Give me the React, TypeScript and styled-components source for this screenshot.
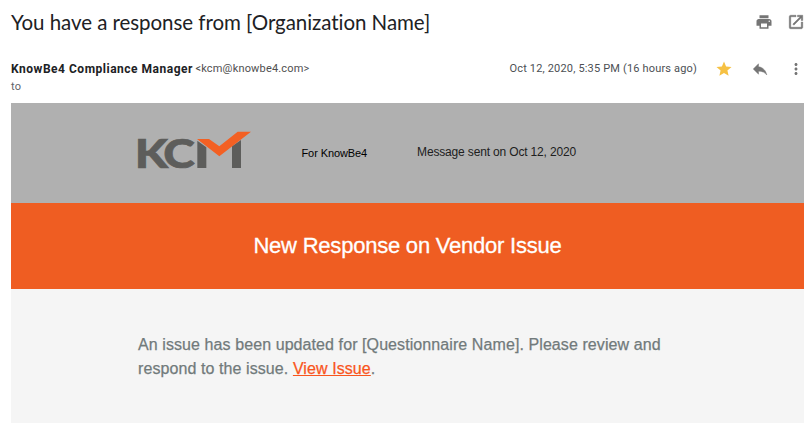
import React from "react";
import styled, { createGlobalStyle } from "styled-components";
import { MdPrint, MdOpenInNew, MdStar, MdReply, MdMoreVert } from "react-icons/md";

const GlobalStyle = createGlobalStyle`
  body { margin: 0; background: #fff; }
  * { box-sizing: border-box; }
`;

const Page = styled.main`
  width: 810px;
  height: 441px;
  padding: 0 6px 0 11px;
  overflow: hidden;
  font-family: Roboto, sans-serif;
  color: #202124;
`;

const SubjectBar = styled.header`
  display: flex;
  align-items: center;
  justify-content: space-between;
  height: 44px;
  margin-right: -1px;
`;

const Subject = styled.h1`
  margin: 0;
  font: 400 20.5px/28px Lato, sans-serif;
  letter-spacing: -0.05px;
  white-space: nowrap;
`;

const Actions = styled.div<{ $gap: number }>`
  display: flex;
  align-items: center;
  gap: ${(p) => p.$gap}px;
`;

const IconButton = styled.button<{ $color?: string; $bold?: boolean }>`
  display: grid;
  place-items: center;
  width: 18px;
  height: 18px;
  padding: 0;
  border: 0;
  background: none;
  color: ${(p) => p.$color ?? "#757575"};

  path:not([fill="none"]) {
    stroke-width: ${(p) => (p.$bold ? 0.6 : 0)};
  }
  path[fill="none"] {
    stroke: none;
  }
`;

const SenderBar = styled.div`
  display: flex;
  align-items: center;
  height: 18px;
  margin: 16px -1px 0 0;
  white-space: nowrap;
`;

const Sender = styled.span`
  font-size: 12px;
  font-weight: 700;
  letter-spacing: 0.51px;
`;

const Address = styled.span`
  margin: -1px 0 0 2.5px;
  font-size: 11px;
  letter-spacing: 0.17px;
  color: #505050;
`;

const SentAt = styled.span`
  margin: -1px 18px 0 auto;
  font-size: 11px;
  letter-spacing: 0.17px;
  color: #4c4f54;
`;

const Recipient = styled.div`
  height: 25px;
  font-size: 11px;
  line-height: 17px;
  letter-spacing: 0.2px;
  color: #5f6368;
`;

const Message = styled.article`
  width: 793px;
  font-family: "Liberation Sans", Arial, sans-serif;
`;

const Brand = styled.section`
  display: flex;
  align-items: flex-start;
  height: 100px;
  padding: 28px 0 0 127px;
  background: #b0b0b0;
`;

const Logo = styled.svg`
  display: block;
  width: 114px;
  height: 38px;
  overflow: visible;
`;

const LogoLetter = styled.text`
  font: 900 122px Lato, sans-serif;
  fill: #5d5d5b;
  stroke: #5d5d5b;
  stroke-width: 2px;
`;

const Company = styled.span`
  margin: 15px 0 0 49.5px;
  font-size: 11px;
  line-height: 14px;
  letter-spacing: -0.1px;
  color: #000;
`;

const SentNote = styled.span`
  margin: 14px 0 0 50px;
  font-size: 12px;
  line-height: 14px;
  letter-spacing: -0.16px;
  color: #202020;
`;

const Banner = styled.h2`
  display: flex;
  align-items: center;
  justify-content: center;
  height: 86px;
  margin: 0;
  background: #ef5d22;
  color: #fff;
  font-size: 22px;
  font-weight: 400;
  letter-spacing: -0.22px;
  -webkit-text-stroke: 0.3px currentColor;
`;

const Body = styled.section`
  height: 134px;
  padding: 44px 127px 0;
  background: #f5f5f5;
  color: #717a7b;
  font-size: 16px;
  line-height: 24px;
  letter-spacing: 0.086px;
  -webkit-text-stroke: 0.25px currentColor;
  white-space: nowrap;
`;

const Paragraph = styled.p`
  margin: 0;
`;

const IssueLink = styled.a`
  color: #f9551c;
  text-decoration: underline;
`;

function KcmLogo() {
  return (
    <Logo viewBox="24 33 342 114" role="img" aria-label="KCM">
      <LogoLetter transform="translate(14 144) scale(1.18 .98)">K</LogoLetter>
      <LogoLetter transform="translate(100 144) scale(1.18 .97)">C</LogoLetter>
      <path d="M202 62 L229 82 V144 H202Z M306 79 L333 60 V144 H306Z" fill="#5d5d5b" />
      <path d="M201 57 H237 L268 79 L323 35 H363 L268 109Z" fill="#f36023" />
    </Logo>
  );
}

export default function App() {
  return (
    <>
      <GlobalStyle />
      <Page>
        <SubjectBar>
          <Subject>You have a response from [Organization Name]</Subject>
          <Actions $gap={14}>
            <IconButton aria-label="Print"><MdPrint size={18} /></IconButton>
            <IconButton aria-label="Open in new window" $bold><MdOpenInNew size={18} /></IconButton>
          </Actions>
        </SubjectBar>
        <SenderBar>
          <Sender>KnowBe4 Compliance Manager</Sender>
          <Address>&lt;kcm@knowbe4.com&gt;</Address>
          <SentAt>Oct 12, 2020, 5:35 PM (16 hours ago)</SentAt>
          <Actions $gap={18}>
            <IconButton aria-label="Starred" $color="#f6c143"><MdStar size={18} /></IconButton>
            <IconButton aria-label="Reply" $bold><MdReply size={18} /></IconButton>
            <IconButton aria-label="More"><MdMoreVert size={18} /></IconButton>
          </Actions>
        </SenderBar>
        <Recipient>to</Recipient>
        <Message>
          <Brand>
            <KcmLogo />
            <Company>For KnowBe4</Company>
            <SentNote>Message sent on Oct 12, 2020</SentNote>
          </Brand>
          <Banner>New Response on Vendor Issue</Banner>
          <Body>
            <Paragraph>
              An issue has been updated for [Questionnaire Name]. Please review and
              <br />
              respond to the issue. <IssueLink>View Issue</IssueLink>.
            </Paragraph>
          </Body>
        </Message>
      </Page>
    </>
  );
}
